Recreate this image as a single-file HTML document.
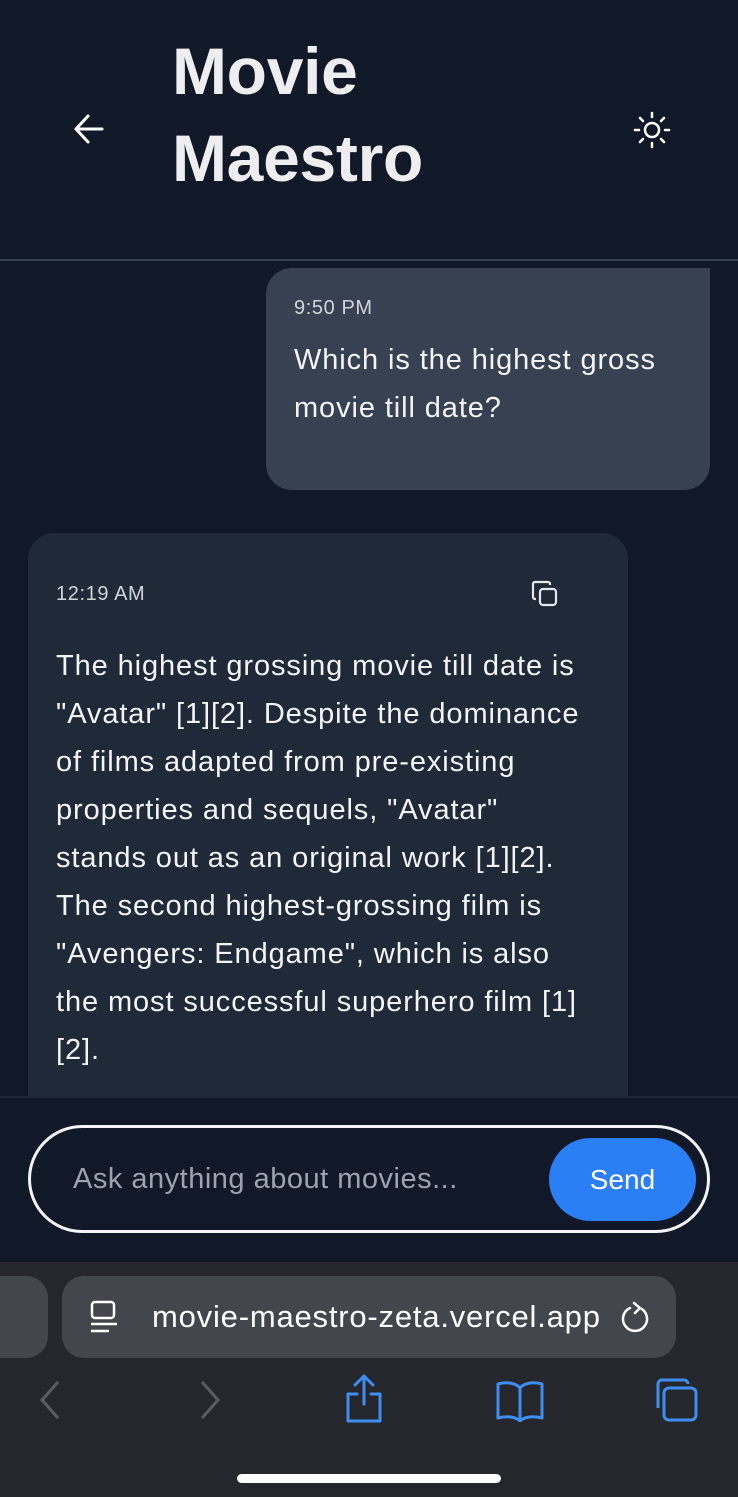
<!DOCTYPE html>
<html><head><meta charset="utf-8"><style>
*{margin:0;padding:0;box-sizing:border-box}
body{width:738px;height:1497px;background:#111827;font-family:"Liberation Sans",sans-serif;position:relative;overflow:hidden;color:#f3f4f6}
.hdr{position:absolute;left:0;top:0;width:738px;height:261px;border-bottom:2px solid #334155}
.title{position:absolute;left:172px;top:28px;font-size:66px;font-weight:bold;line-height:87px;color:#eeeef0;letter-spacing:-0.3px}
.ub{position:absolute;left:266px;top:268px;width:444px;height:222px;background:#374151;border-radius:26px 0 26px 26px}
.ab{position:absolute;left:28px;top:533px;width:600px;height:600px;background:#1f2937;border-radius:26px 26px 0 0}
.time{font-size:20px;color:#d1d5db;letter-spacing:0.6px}
.msg{font-size:29px;line-height:48px;color:#f3f4f6;letter-spacing:0.9px;white-space:nowrap}
.bottom{position:absolute;left:0;top:1096px;width:738px;height:166px;background:#111827;border-top:2px solid #1f2937}
.inp{position:absolute;left:28px;top:1125px;width:682px;height:108px;border:3px solid #f3f4f6;border-radius:54px}
.send{position:absolute;left:549px;top:1138px;width:147px;height:83px;background:#2b7ff5;border-radius:42px;color:#fff;font-size:28px;text-align:center;line-height:83px}
.saf{position:absolute;left:0;top:1262px;width:738px;height:235px;background:#26272c}
.url{position:absolute;left:62px;top:1276px;width:614px;height:82px;background:#44464e;border-radius:22px}
.tab{position:absolute;left:-20px;top:1276px;width:68px;height:82px;background:#44464e;border-radius:22px}
</style></head><body>
<div class="hdr">
<svg style="position:absolute;left:72px;top:112px" width="34" height="34" viewBox="0 0 34 34" fill="none" stroke="#fff" stroke-width="3" stroke-linecap="round" stroke-linejoin="round"><path d="M30 17H4M16 4L4 17l12 13"/></svg>
<div class="title">Movie<br>Maestro</div>
<svg style="position:absolute;left:633px;top:111px" width="38" height="38" viewBox="0 0 38 38" fill="none" stroke="#fff" stroke-width="2.5" stroke-linecap="round"><circle cx="19" cy="19" r="7"/><path d="M19 2v4M19 32v4M2 19h4M32 19h4M7 7l3 3M28 28l3 3M7 31l3-3M28 10l3-3"/></svg>
</div>
<div class="ub">
<div class="time" style="position:absolute;left:28px;top:29px">9:50 PM</div>
<div class="msg" style="position:absolute;left:28px;top:68px">Which is the highest gross<br>movie till date?</div>
</div>
<div class="ab">
<div class="time" style="position:absolute;left:28px;top:50px">12:19 AM</div>
<svg style="position:absolute;left:503px;top:47px" width="28" height="28" viewBox="0 0 28 28" fill="none" stroke="#e5e7eb" stroke-width="2.2"><rect x="9" y="9" width="16" height="16" rx="3"/><path d="M5 19H4a2 2 0 0 1-2-2V4a2 2 0 0 1 2-2h13a2 2 0 0 1 2 2v1"/></svg>
<div class="msg" style="position:absolute;left:28px;top:109px">The highest grossing movie till date is<br>"Avatar" [1][2]. Despite the dominance<br>of films adapted from pre-existing<br>properties and sequels, "Avatar"<br>stands out as an original work [1][2].<br>The second highest-grossing film is<br>"Avengers: Endgame", which is also<br>the most successful superhero film [1]<br>[2].</div>
</div>
<div class="bottom"></div>
<div class="inp"><div style="position:absolute;left:42px;top:0;line-height:102px;font-size:29px;color:#9ca3af;letter-spacing:0.5px">Ask anything about movies...</div></div>
<div class="send">Send</div>
<div class="saf"></div>
<div class="tab"></div>
<div class="url">
<svg style="position:absolute;left:26px;top:24px" width="32" height="34" viewBox="0 0 32 34" fill="none" stroke="#fff" stroke-width="2.5"><rect x="4" y="2" width="22" height="16" rx="3"/><path d="M3 24h26M3 31h18"/></svg>
<div style="position:absolute;left:90px;top:0;line-height:82px;font-size:31px;color:#fff;letter-spacing:0.8px">movie-maestro-zeta.vercel.app</div>
<svg style="position:absolute;left:556px;top:24px" width="34" height="36" viewBox="0 0 34 36" fill="none" stroke="#fff" stroke-width="2.5" stroke-linecap="round"><path d="M22 8a12 12 0 1 1-10 0"/><path d="M16 3l6 5-5 5"/></svg>
</div>
<svg style="position:absolute;left:36px;top:1380px" width="28" height="40" viewBox="0 0 28 40" fill="none" stroke="#5b5c61" stroke-width="3"><path d="M22 2L6 20l16 18"/></svg>
<svg style="position:absolute;left:196px;top:1380px" width="28" height="40" viewBox="0 0 28 40" fill="none" stroke="#5b5c61" stroke-width="3"><path d="M6 2l16 18L6 38"/></svg>
<svg style="position:absolute;left:342px;top:1374px" width="44" height="50" viewBox="0 0 44 50" fill="none" stroke="#3d8ef0" stroke-width="3" stroke-linecap="round" stroke-linejoin="round"><path d="M22 2v28M13 11l9-9 9 9M15 20H6v27h32V20h-9"/></svg>
<svg style="position:absolute;left:495px;top:1380px" width="50" height="42" viewBox="0 0 50 42" fill="none" stroke="#3d8ef0" stroke-width="3" stroke-linejoin="round"><path d="M25 8C20 2 10 2 3 4v34c7-2 17-2 22 3 5-5 15-5 22-3V4c-7-2-17-2-22 4zM25 8v33"/></svg>
<svg style="position:absolute;left:652px;top:1376px" width="48" height="48" viewBox="0 0 48 48" fill="none" stroke="#3d8ef0" stroke-width="3"><path d="M6 32V8a4 4 0 0 1 4-4h22a4 4 0 0 1 4 4"/><rect x="12" y="12" width="32" height="32" rx="5"/></svg>
<div style="position:absolute;left:237px;top:1474px;width:264px;height:9px;background:#fff;border-radius:5px"></div>
</body></html>
